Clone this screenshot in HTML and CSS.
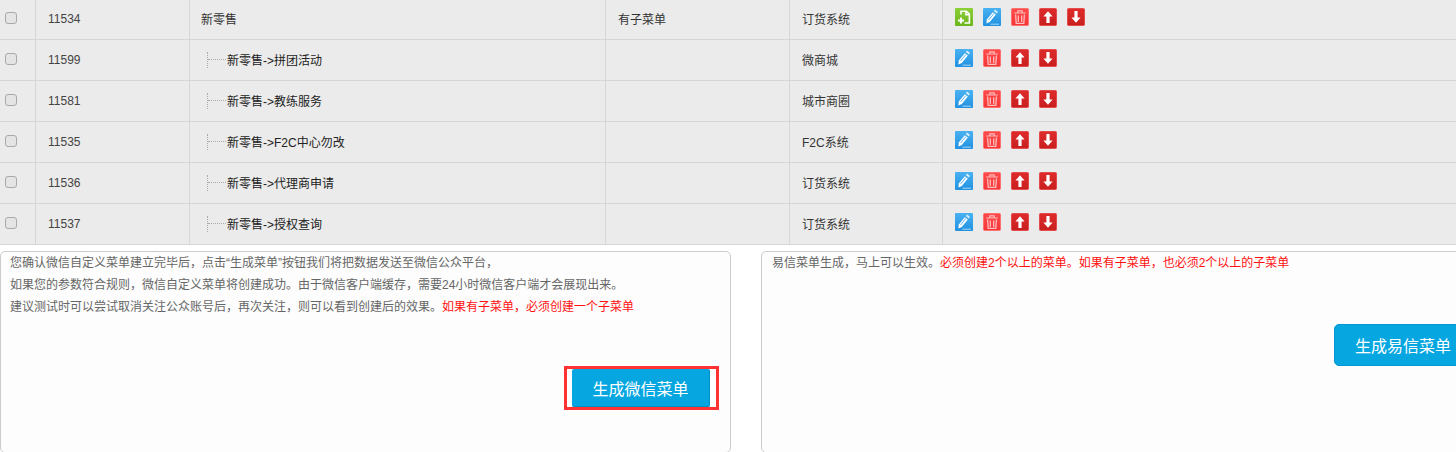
FILE: index.html
```html
<!DOCTYPE html>
<html lang="zh-CN">
<head>
<meta charset="utf-8">
<title>菜单</title>
<link rel="stylesheet" href="styles.css">
</head>
<body>
<svg class="defs" width="0" height="0" aria-hidden="true">
  <defs>
    <linearGradient id="g-green" x1="0" y1="0" x2="0" y2="1"><stop offset="0" stop-color="#8ccf36"/><stop offset="1" stop-color="#6db51f"/></linearGradient>
    <linearGradient id="g-blue" x1="0" y1="0" x2="0" y2="1"><stop offset="0" stop-color="#4ab2f2"/><stop offset="1" stop-color="#2090e0"/></linearGradient>
    <linearGradient id="g-del" x1="0" y1="0" x2="0" y2="1"><stop offset="0" stop-color="#ff4a4a"/><stop offset="1" stop-color="#f53636"/></linearGradient>
    <linearGradient id="g-red" x1="0" y1="0" x2="0" y2="1"><stop offset="0" stop-color="#de2b2b"/><stop offset="1" stop-color="#c91f1f"/></linearGradient>
    <symbol id="i-add" viewBox="0 0 18 18"><rect width="18" height="18" rx="1" fill="url(#g-green)"/><path d="M6 6.5V3.2h5.4l3 3V15H9.5M11 3.5V6.8h3.2" fill="none" stroke="#fff" stroke-width="1.6"/><path d="M6 9.5v6M3 12.5h6" stroke="#fff" stroke-width="1.9"/></symbol>
    <symbol id="i-edit" viewBox="0 0 18 18"><rect width="18" height="18" rx="1" fill="url(#g-blue)"/><path d="M3.8 11.6 9.8 4.2l3 2.3-6 7.6-3.4 1.4z" fill="#fff"/><path d="M10.8 3 12 1.6l3 2.3-1.2 1.5z" fill="#d8eefc"/><path d="M5.6 12 10.8 5.6" stroke="#4aa9ec" stroke-width=".9"/><path d="M7.5 16.2h8.5" stroke="#a9d8f7" stroke-width="1"/></symbol>
    <symbol id="i-del" viewBox="0 0 18 18"><rect x=".5" y=".5" width="17" height="17" rx="1" fill="url(#g-del)" stroke="#ff7070"/><path d="M3.2 5h11.6M6.8 4.6V2.8h4.4v1.8" fill="none" stroke="#ffbdbd" stroke-width="1.2"/><path d="M4.6 6.5l.6 8.9h7.6l.6-8.9M7.3 7.5v6.4M10.7 7.5v6.4" fill="none" stroke="#ffbdbd" stroke-width="1.3"/></symbol>
    <symbol id="i-up" viewBox="0 0 18 18"><rect x=".5" y=".5" width="17" height="17" rx="1" fill="url(#g-red)" stroke="#e24c4c"/><path d="M9 3.2 13.6 8.6H10.6V15H7.4V8.6H4.4z" fill="#fff"/></symbol>
    <symbol id="i-down" viewBox="0 0 18 18"><rect x=".5" y=".5" width="17" height="17" rx="1" fill="url(#g-red)" stroke="#e24c4c"/><path d="M9 14.8 4.4 9.4H7.4V3h3.2V9.4h3z" fill="#fff"/></symbol>
  </defs>
</svg>
<table class="menu-table">
  <colgroup><col class="c-check"><col class="c-id"><col class="c-name"><col class="c-sub"><col class="c-sys"><col class="c-ops"></colgroup>
  <tbody>
    <tr>
      <td><input class="check" type="checkbox"></td><td class="num">11534</td><td class="parent">新零售</td><td>有子菜单</td><td>订货系统</td>
      <td><div class="ops"><svg class="icon"><use href="#i-add"/></svg><svg class="icon"><use href="#i-edit"/></svg><svg class="icon"><use href="#i-del"/></svg><svg class="icon"><use href="#i-up"/></svg><svg class="icon"><use href="#i-down"/></svg></div></td>
    </tr>
    <tr>
      <td><input class="check" type="checkbox"></td><td class="num">11599</td><td><div class="tree"><span class="branch"></span>新零售-&gt;拼团活动</div></td><td></td><td>微商城</td>
      <td><div class="ops"><svg class="icon"><use href="#i-edit"/></svg><svg class="icon"><use href="#i-del"/></svg><svg class="icon"><use href="#i-up"/></svg><svg class="icon"><use href="#i-down"/></svg></div></td>
    </tr>
    <tr>
      <td><input class="check" type="checkbox"></td><td class="num">11581</td><td><div class="tree"><span class="branch"></span>新零售-&gt;教练服务</div></td><td></td><td>城市商圈</td>
      <td><div class="ops"><svg class="icon"><use href="#i-edit"/></svg><svg class="icon"><use href="#i-del"/></svg><svg class="icon"><use href="#i-up"/></svg><svg class="icon"><use href="#i-down"/></svg></div></td>
    </tr>
    <tr>
      <td><input class="check" type="checkbox"></td><td class="num">11535</td><td><div class="tree"><span class="branch"></span>新零售-&gt;F2C中心勿改</div></td><td></td><td>F2C系统</td>
      <td><div class="ops"><svg class="icon"><use href="#i-edit"/></svg><svg class="icon"><use href="#i-del"/></svg><svg class="icon"><use href="#i-up"/></svg><svg class="icon"><use href="#i-down"/></svg></div></td>
    </tr>
    <tr>
      <td><input class="check" type="checkbox"></td><td class="num">11536</td><td><div class="tree"><span class="branch"></span>新零售-&gt;代理商申请</div></td><td></td><td>订货系统</td>
      <td><div class="ops"><svg class="icon"><use href="#i-edit"/></svg><svg class="icon"><use href="#i-del"/></svg><svg class="icon"><use href="#i-up"/></svg><svg class="icon"><use href="#i-down"/></svg></div></td>
    </tr>
    <tr>
      <td><input class="check" type="checkbox"></td><td class="num">11537</td><td><div class="tree"><span class="branch"></span>新零售-&gt;授权查询</div></td><td></td><td>订货系统</td>
      <td><div class="ops"><svg class="icon"><use href="#i-edit"/></svg><svg class="icon"><use href="#i-del"/></svg><svg class="icon"><use href="#i-up"/></svg><svg class="icon"><use href="#i-down"/></svg></div></td>
    </tr>
  </tbody>
</table>
<div class="panels">
  <section class="panel panel-left">
    <p class="note">您确认微信自定义菜单建立完毕后，点击“生成菜单”按钮我们将把数据发送至微信公众平台，</p>
    <p class="note">如果您的参数符合规则，微信自定义菜单将创建成功。由于微信客户端缓存，需要24小时微信客户端才会展现出来。</p>
    <p class="note">建议测试时可以尝试取消关注公众账号后，再次关注，则可以看到创建后的效果。<span class="warn">如果有子菜单，必须创建一个子菜单</span></p>
    <div class="highlight"><button class="gen-btn" type="button">生成微信菜单</button></div>
  </section>
  <section class="panel panel-right">
    <p class="note">易信菜单生成，马上可以生效。<span class="warn">必须创建2个以上的菜单。如果有子菜单，也必须2个以上的子菜单</span></p>
    <button class="gen-btn gen-btn-yx" type="button">生成易信菜单</button>
  </section>
</div>
</body>
</html>
```
FILE: styles.css
```css
html, body {
  margin: 0;
  padding: 0;
  height: 452px;
  overflow: hidden;
  background: #fff;
}
body {
  width: 1456px;
  font-family: "Liberation Sans", "Noto Sans CJK SC", sans-serif;
  font-size: 12px;
  color: #333;
}
.defs { display: block; height: 0; }
.menu-table {
  width: 1456px;
  margin-top: -1px;
  table-layout: fixed;
  border-collapse: separate;
  border-spacing: 0;
  background: #ebebeb;
}
.c-check { width: 36px; }
.c-id { width: 154px; }
.c-name { width: 416px; }
.c-sub { width: 184px; }
.c-sys { width: 153px; }
.menu-table td {
  box-sizing: border-box;
  height: 41px;
  padding: 0 12px 2px;
  border-right: 1px solid #d6d6d6;
  border-bottom: 1px solid #d6d6d6;
  vertical-align: middle;
}
.menu-table td:first-child { padding: 0 0 0 5px; }
.menu-table td.num { padding-bottom: 0; color: #444; }
.menu-table td:last-child { border-right: 0; padding-bottom: 0; }
.menu-table td.parent { padding-left: 11px; }
.check {
  appearance: none;
  display: block;
  width: 12px;
  height: 12px;
  margin: -2px 0 0;
  border: 1px solid #a9a9a9;
  border-radius: 3px;
  background: #e4e4e4;
  box-sizing: border-box;
}
.tree {
  display: flex;
  align-items: center;
  padding-left: 5px;
  color: #222;
}
.branch {
  position: relative;
  width: 20px;
  height: 16px;
  margin-top: 2px;
  flex: none;
  border-left: 1px dotted #aaa;
  box-sizing: border-box;
}
.branch::after {
  content: "";
  position: absolute;
  left: 0;
  top: 7px;
  width: 18px;
  border-top: 1px dotted #aaa;
}
.ops {
  display: flex;
  gap: 10px;
  margin-top: -4px;
}
.icon { width: 18px; height: 18px; display: block; flex: none; }
.panels {
  display: flex;
  gap: 30px;
  margin-top: 6px;
  width: 1700px;
}
.panel {
  position: relative;
  box-sizing: border-box;
  height: 202px;
  padding: 0 9px;
  border: 1px solid #ccc;
  border-radius: 5px;
  background: #fdfdfd;
  color: #666;
  flex: none;
}
.panel-left { width: 731px; }
.panel-right { width: 900px; padding-left: 10px; }
.note { margin: 0; line-height: 22px; }
.warn { color: #f11; }
.gen-btn {
  display: block;
  box-sizing: border-box;
  width: 138px;
  height: 38px;
  padding: 0;
  border: 0;
  border-bottom: 1px solid #0590c4;
  border-right: 1px solid #0590c4;
  border-radius: 2px;
  background: #06a7e1;
  color: #fff;
  font-family: "Noto Sans CJK SC", sans-serif;
  font-size: 16px;
}
.highlight {
  position: absolute;
  left: 563px;
  top: 114px;
  box-sizing: border-box;
  width: 155px;
  height: 44px;
  border: 3px solid #f33;
  padding: 0 6px 0 5px;
  background: #fff;
}
.gen-btn-yx {
  position: absolute;
  left: 572px;
  top: 72px;
  width: 138px;
  height: 42px;
  border-radius: 5px;
  border: 1px solid #0597cf;
}
```
